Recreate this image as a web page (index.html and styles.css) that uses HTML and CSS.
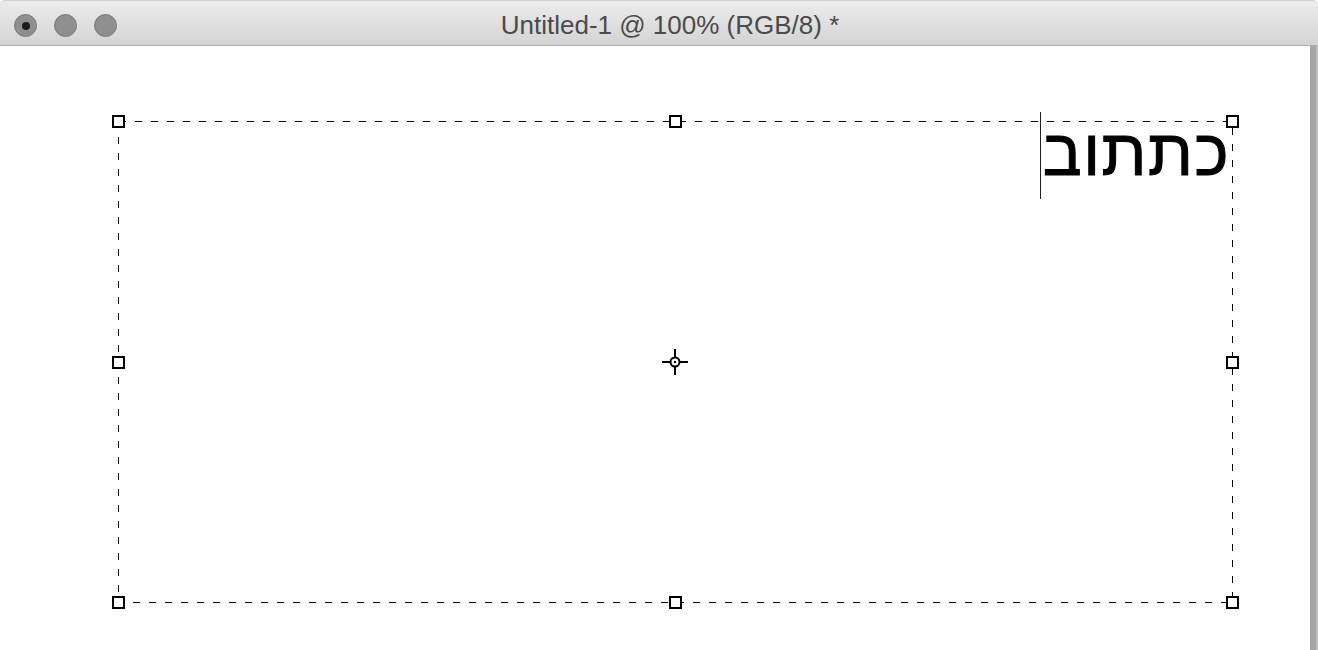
FILE: index.html
```html
<!DOCTYPE html>
<html lang="en">
<head>
    <meta charset="UTF-8">
    <meta name="viewport" content="width=device-width, initial-scale=1.0">
    <title>Untitled-1 @ 100% (RGB/8) *</title>
    <link rel="stylesheet" href="styles.css">
</head>
<body>
    <div class="window">
        <div class="titlebar">
            <div class="lights">
                <span class="light active"></span>
                <span class="light"></span>
                <span class="light"></span>
            </div>
            <div class="title">Untitled-1 @ 100% (RGB/8) *</div>
        </div>
        <div class="workspace">
            <div class="canvas">
                <!-- transform box of the type layer -->
                <svg class="bounds" width="1310" height="604" viewBox="0 0 1310 604">
                    <rect class="dash" x="118.5" y="75.5" width="1114" height="481" />
                    <g class="handles">
                        <rect x="112.5" y="69.5" width="11" height="11" />
                        <rect x="669.5" y="69.5" width="11" height="11" />
                        <rect x="1226.5" y="69.5" width="11" height="11" />
                        <rect x="112.5" y="310.5" width="11" height="11" />
                        <rect x="1226.5" y="310.5" width="11" height="11" />
                        <rect x="112.5" y="550.5" width="11" height="11" />
                        <rect x="669.5" y="550.5" width="11" height="11" />
                        <rect x="1226.5" y="550.5" width="11" height="11" />
                    </g>
                    <g class="pivot">
                        <line x1="662" y1="316" x2="670" y2="316" />
                        <line x1="680" y1="316" x2="688" y2="316" />
                        <line x1="675" y1="303" x2="675" y2="311" />
                        <line x1="675" y1="321" x2="675" y2="329" />
                        <circle cx="675" cy="316" r="4.5" />
                        <rect class="dot" x="674" y="315" width="2" height="2" />
                    </g>
                </svg>
                <div class="type-layer">
                    <span class="caret"></span>
                    <span class="type" dir="rtl" lang="he">כתתוב</span>
                </div>
            </div>
            <div class="scrollbar"></div>
        </div>
    </div>
</body>
</html>
```

FILE: styles.css
```css
html, body {
    margin: 0;
    padding: 0;
    background-color: #fff;
}
body {
    font-family: "Liberation Sans", Arial, sans-serif;
    width: 1318px;
    height: 650px;
    overflow: hidden;
}
.window {
    display: flex;
    flex-direction: column;
    height: 650px;
}
.titlebar {
    position: relative;
    height: 46px;
    display: flex;
    align-items: center;
    justify-content: center;
    background: linear-gradient(#ececec, #d4d4d4);
    border-bottom: 1px solid #b1b1b1;
    border-top: 1px solid #d0d0d0;
    border-radius: 5px 5px 0 0;
    box-sizing: border-box;
    flex-shrink: 0;
}
.lights {
    position: absolute;
    left: 14px;
    top: 13px;
    display: flex;
    gap: 17px;
}
.light {
    display: flex;
    align-items: center;
    justify-content: center;
    width: 23px;
    height: 23px;
    border-radius: 50%;
    background-color: #8f8f8f;
    border: 1px solid #7b7b7b;
    box-sizing: border-box;
}
.light.active::after {
    content: "";
    width: 8px;
    height: 8px;
    border-radius: 50%;
    background-color: #1c1c1c;
}
.title {
    font-family: "Liberation Sans", Arial, sans-serif;
    font-size: 26px;
    color: #4b4b4b;
    margin-left: 22px;
    margin-top: 4px;
}
.workspace {
    flex: 1;
    display: flex;
}
.canvas {
    position: relative;
    flex: 1;
    background-color: #fff;
}
.scrollbar {
    width: 8px;
    background: linear-gradient(to right, #a6a6a6 0, #a6a6a6 6px, #bdbdbd 6px);
}
.bounds {
    position: absolute;
    left: 0;
    top: 0;
}
.bounds .dash {
    fill: none;
    stroke: #000;
    stroke-width: 1;
    stroke-dasharray: 7 9;
    shape-rendering: crispEdges;
}
.handles rect {
    fill: #fff;
    stroke: #000;
    stroke-width: 2;
    shape-rendering: crispEdges;
}
.pivot line,
.pivot circle {
    fill: none;
    stroke: #000;
    stroke-width: 2;
}
.pivot .dot {
    fill: #000;
}
.type-layer {
    position: absolute;
    top: 66px;
    right: 80px;
    display: flex;
    align-items: center;
    height: 87px;
}
.caret {
    width: 1px;
    height: 87px;
    background-color: #222;
}
.type {
    font-family: "Liberation Sans", Arial, sans-serif;
    font-size: 65px;
    line-height: 81px;
    letter-spacing: 1.5px;
    -webkit-text-stroke: 1px #000;
    color: #000;
    margin-left: 2px;
    margin-bottom: 6px;
}
```
